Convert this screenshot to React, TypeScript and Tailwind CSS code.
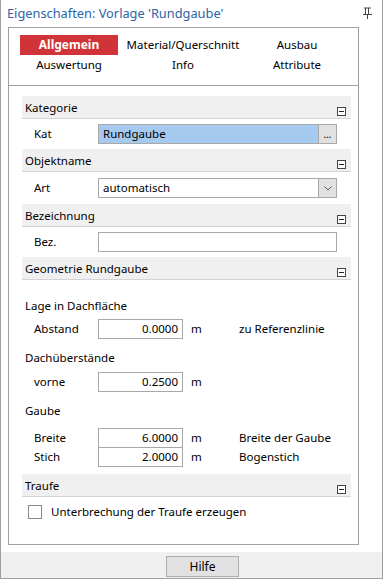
import React from 'react';

const font = { fontFamily: '"Noto Sans", "Liberation Sans", sans-serif' };

const PinIcon: React.FC = () => (
  <svg width="9" height="12" viewBox="0 0 9 12" className="text-[#444]">
    <rect x="1" y="0.5" width="7" height="1" fill="currentColor" />
    <rect x="2" y="1" width="1" height="6" fill="currentColor" />
    <rect x="5" y="1" width="1" height="6" fill="currentColor" />
    <rect x="0" y="7" width="9" height="1" fill="currentColor" />
    <rect x="4" y="8" width="1" height="4" fill="currentColor" />
  </svg>
);

const CollapseBox: React.FC = () => (
  <span className="w-[9px] h-[9px] border border-[#444] bg-white flex items-center justify-center">
    <span className="w-[5px] h-px bg-[#222]" />
  </span>
);

const SectionHeader: React.FC<{ title: string }> = ({ title }) => (
  <div className="h-[23px] bg-[#f0f0f0] border-b border-[#d4d4d4] flex justify-between pl-[3px] pr-[5px]">
    <span className="leading-[23px]">{title}</span>
    <span className="self-end mb-[2px]"><CollapseBox /></span>
  </div>
);

const NumberRow: React.FC<{ label: string; value: string; note?: string; className?: string }> = ({ label, value, note, className }) => (
  <div className={`flex items-center h-[20px] ${className ?? ''}`}>
    <span className="w-[76px] pl-[12px]">{label}</span>
    <div className="w-[85px] h-[20px] border border-[#a8a8a8] bg-white text-right pr-[4px] leading-[18px]">{value}</div>
    <span className="w-[56px] pl-[8px]">m</span>
    {note && <span>{note}</span>}
  </div>
);

const tabs = [
  ['Allgemein', 'Material/Querschnitt', 'Ausbau'],
  ['Auswertung', 'Info', 'Attribute'],
];

export default function App() {
  return (
    <div className="w-[383px] h-[579px] bg-white border-x border-b border-[#a0a0a0] flex flex-col text-[11.5px] text-black" style={font}>
      <div className="h-[27px] flex items-center justify-between pl-[6px] pr-[10px]">
        <span className="text-[#2c64a8] text-[12.8px]">Eigenschaften: Vorlage 'Rundgaube'</span>
        <span className="mt-[-2px]"><PinIcon /></span>
      </div>

      <div className="ml-[7px] w-[351px] border border-[#a0a0a0] h-[59px] pt-[7px] px-[5px]">
        {tabs.map((row, i) => (
          <div key={i} className="grid grid-cols-[110px_110px_110px] gap-x-[4px] h-[20px]">
            {row.map(t => (
              <div key={t} className="flex justify-center">
                {t === 'Allgemein' ? (
                  <span className="w-[98px] h-[20px] bg-[#d13438] text-white font-bold text-[12px] flex items-center justify-center">{t}</span>
                ) : (
                  <span className="leading-[20px]">{t}</span>
                )}
              </div>
            ))}
          </div>
        ))}
      </div>

      <div className="ml-[7px] w-[351px] h-[459px] border-x border-b border-[#a0a0a0] pt-[10px] pl-[13px] pr-[7px]">
        <SectionHeader title="Kategorie" />
        <div className="flex items-center h-[30px]">
          <span className="w-[76px] pl-[12px]">Kat</span>
          <div className="flex-1 h-[20px] bg-[#a6c9ef] border border-[#a8a8a8] pl-[4px] leading-[18px]">Rundgaube</div>
          <div className="w-[18px] h-[20px] bg-[#e1e1e1] border border-l-0 border-[#a8a8a8] text-[10px] flex items-center justify-center">...</div>
          <span className="w-[14px]" />
        </div>

        <SectionHeader title="Objektname" />
        <div className="flex items-center h-[32px]">
          <span className="w-[76px] pl-[12px]">Art</span>
          <div className="flex-1 h-[20px] bg-white border border-[#a8a8a8] pl-[4px] leading-[18px]">automatisch</div>
          <div className="w-[18px] h-[20px] bg-[#e1e1e1] border border-l-0 border-[#a8a8a8] flex items-center justify-center">
            <svg width="8" height="5" viewBox="0 0 8 5"><path d="M0.5 0.5 L4 4 L7.5 0.5" stroke="#555" fill="none" /></svg>
          </div>
          <span className="w-[14px]" />
        </div>

        <SectionHeader title="Bezeichnung" />
        <div className="flex items-center h-[30px]">
          <span className="w-[76px] pl-[12px]">Bez.</span>
          <div className="flex-1 h-[20px] bg-white border border-[#a8a8a8]" />
          <span className="w-[14px]" />
        </div>

        <SectionHeader title="Geometrie Rundgaube" />
        <div className="pl-[3px] pt-[17px] leading-[18px]">Lage in Dachfläche</div>
        <NumberRow label="Abstand" value="0.0000" note="zu Referenzlinie" className="mt-[4px]" />
        <div className="pl-[3px] pt-[10px] leading-[18px]">Dachüberstände</div>
        <NumberRow label="vorne" value="0.2500" className="mt-[5px]" />
        <div className="pl-[3px] pt-[10px] leading-[18px]">Gaube</div>
        <NumberRow label="Breite" value="6.0000" note="Breite der Gaube" className="mt-[8px]" />
        <NumberRow label="Stich" value="2.0000" note="Bogenstich" className="-mt-px" />

        <div className="mt-[7px]">
          <SectionHeader title="Traufe" />
        </div>
        <div className="flex items-center h-[30px] pl-[6px] gap-[9px]">
          <span className="w-[14px] h-[14px] border border-[#8a8a8a] bg-white" />
          <span className="text-[11.5px]">Unterbrechung der Traufe erzeugen</span>
        </div>
      </div>

      <div className="flex-1 mt-[7px] bg-[#f0f0f0] flex items-start justify-center pt-[4px] pl-[22px]">
        <button className="w-[73px] h-[21px] bg-[#e1e1e1] border border-[#adadad] text-[12px]">Hilfe</button>
      </div>
    </div>
  );
}
